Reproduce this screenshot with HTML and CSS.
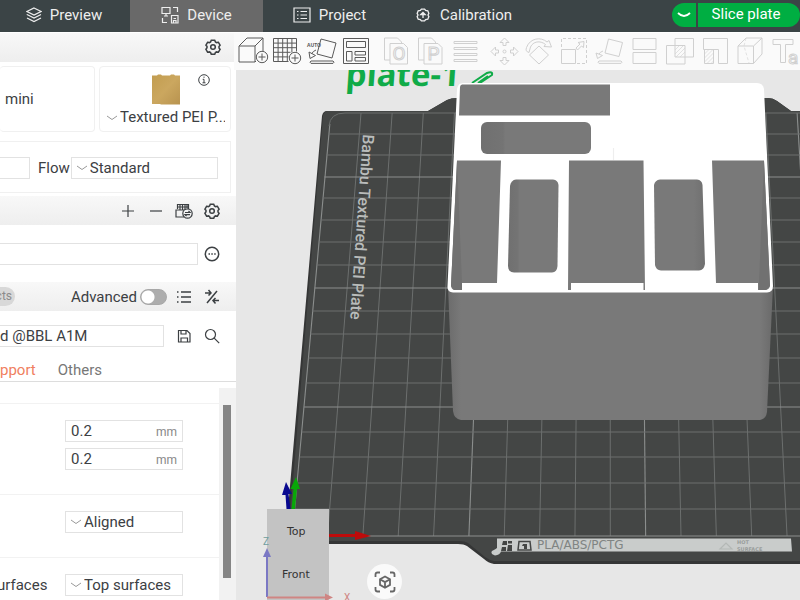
FILE: index.html
```html
<!DOCTYPE html>
<html lang="en">
<head>
<meta charset="utf-8">
<title>Slicer</title>
<link rel="stylesheet" href="styles.css">
</head>
<body>
<svg class="defs" aria-hidden="true">
  <symbol id="gear" viewBox="0 0 16 16"><path d="M6.3 1.2h3.4l.7 1.7 1.2.7 1.8-.3 1.7 2.9-1.1 1.4v1.3l1.1 1.4-1.7 2.9-1.8-.3-1.2.7-.7 1.7H6.3l-.7-1.7-1.2-.7-1.8.3-1.7-2.9L2 8.7V7.400L.9 6.200l1.700-2.900 1.800.3 1.200-.7z"/><circle cx="8" cy="8" r="2.300"/></symbol>
  <symbol id="chev" viewBox="0 0 12 8"><path d="M1 2l5 3.500 5-3.500"/></symbol>
</svg>
<header class="topbar">
  <nav class="tabs">
    <a class="tab" href="#"><svg class="ic16" viewBox="0 0 16 16"><path d="M8 1l7 3.500-7 3.500-7-3.500zM1 7.500L8 11l7-3.500M1 8v-.5M1 11l7 3.600 7-3.600"/></svg>Preview</a>
    <a class="tab active" href="#"><svg class="ic18" viewBox="0 0 18 18"><path d="M1 1.500h8v6H1zM5 7.500V10M3 10h4M12 1.500h4.500V6M1.500 12v4.500H6M10.500 9.500h6.500v7.500h-6.500zM12.500 12.500h2.500M12.500 17v-2.500h2.500V17"/></svg>Device</a>
    <a class="tab" href="#"><svg class="ic18" viewBox="0 0 18 18"><path d="M1 2h16v14H1zM4 5.500h1.500M7.500 5.500H14M4 9h1.500M7.500 9H14M4 12.500h1.500M7.500 12.500H14"/></svg>Project</a>
    <a class="tab wide" href="#"><svg class="ic14 bold" viewBox="0 0 16 16"><path d="M6.200 1.200h3.600l1.200 1.600 2.500.4 1.200 3-1 1.800 1 1.800-1.200 3-2.500.4-1.200 1.600H6.200L5 13.200l-2.500-.4-1.200-3 1-1.800-1-1.800 1.200-3L5 2.800z"/><path d="M8 11.500V5M5.500 7.500L8 5l2.500 2.500z"/></svg>Calibration</a>
  </nav>
  <div class="slice">
    <button class="slice-menu" type="button" aria-label="Slice options"><svg viewBox="0 0 14 8"><path d="M1 2q6 6 12 0"/></svg></button>
    <button class="slice-go" type="button">Slice plate</button>
  </div>
</header>
<div class="work">
  <aside class="side">
    <div class="band first"><button class="ib" type="button" aria-label="Printer settings"><svg class="ic16 bold"><use href="#gear"/></svg></button></div>
    <div class="cards">
      <div class="card printer">mini</div>
      <div class="card plate">
        <div class="plate-top">
          <svg class="sheet" viewBox="0 0 28 31"><defs><linearGradient id="gold" x1="0" y1="0" x2="1" y2="1"><stop offset="0" stop-color="#c29d50"/><stop offset=".5" stop-color="#cba75f"/><stop offset="1" stop-color="#b8934f"/></linearGradient></defs><path fill="url(#gold)" d="M0 1.500h5l1-1h3l1 1h8l1-1h3l1 1h5v29H9l-1-.5H0z"/></svg>
          <svg class="info" viewBox="0 0 12 12"><circle cx="6" cy="6" r="5.300"/><path d="M6 2.600v1.200M4.700 5.300H6v3.500M4.500 8.800h3"/></svg>
        </div>
        <label class="pick"><svg class="chev"><use href="#chev"/></svg><select aria-label="Plate type"><option>Textured PEI P...</option></select></label>
      </div>
    </div>
    <div class="nozzle">
      <input class="box stub" type="text" aria-label="Diameter">
      <label for="flow">Flow</label>
      <div class="box pick grow"><svg class="chev"><use href="#chev"/></svg><select id="flow"><option>Standard</option></select></div>
    </div>
    <div class="band filament">
      <button class="ib" type="button" aria-label="Add"><svg class="ic16" viewBox="0 0 16 16"><path d="M8 2v12M2 8h12"/></svg></button>
      <button class="ib" type="button" aria-label="Remove"><svg class="ic16" viewBox="0 0 16 16"><path d="M2 8h12"/></svg></button>
      <button class="ib" type="button" aria-label="Sync"><svg class="ic18" viewBox="0 0 18 16"><path d="M2.500 6V1.500h11V6M5 2v5M7.500 2v5M10 2v5M12 2v3M2.500 4h11M9 14H1V7h8"/><circle cx="12.500" cy="10.500" r="4.700"/><path d="M10 9.500h5l-1.500-1.500M15 11.700h-5l1.500 1.500"/></svg></button>
      <button class="ib" type="button" aria-label="Filament settings"><svg class="ic16 bold"><use href="#gear"/></svg></button>
    </div>
    <div class="row">
      <input class="box open" type="text" aria-label="Filament">
      <button class="ib" type="button" aria-label="More"><svg class="ic16 bold" viewBox="0 0 16 16"><circle cx="8" cy="8" r="6.700"/><path d="M4.500 8H6M7.300 8h1.500M10.200 8h1.500"/></svg></button>
    </div>
    <div class="band process">
      <button class="pill" type="button">cts</button>
      <label class="adv">Advanced<input type="checkbox" role="switch"></label>
      <button class="ib" type="button" aria-label="List"><svg class="ic16 bold" viewBox="0 0 16 16"><path d="M1 3h1.500M5 3h10M1 8h1.500M5 8h10M1 13h1.500M5 13h10"/></svg></button>
      <button class="ib" type="button" aria-label="Compare"><svg class="ic16 bold" viewBox="0 0 16 16"><path d="M13 2L3 14M1 4h6M4.500 1L7 4 4.500 6.500M15 11.500H9M11.500 9L9 11.500l2.500 3"/></svg></button>
    </div>
    <div class="row preset">
      <input class="box open" type="text" aria-label="Process" value="d @BBL A1M">
      <button class="ib" type="button" aria-label="Save"><svg class="ic14" viewBox="0 0 14 14"><path d="M1.500 1.500h8.500l3 3v8.500H1.500zM4 1.500v3.500h5V1.500M4 13V9h6.500v4"/></svg></button>
      <button class="ib" type="button" aria-label="Search"><svg class="ic16" viewBox="0 0 16 16"><circle cx="6.500" cy="6.500" r="5"/><path d="M10.200 10.200l5 5"/></svg></button>
    </div>
    <nav class="subtabs"><a class="on" href="#">pport</a><a href="#">Others</a></nav>
    <div class="scroll">
      <form class="params">
        <fieldset>
          <div class="field"><div class="box num"><input type="text" aria-label="Layer height" value="0.2"><span>mm</span></div></div>
          <div class="field"><div class="box num"><input type="text" aria-label="Initial layer height" value="0.2"><span>mm</span></div></div>
        </fieldset>
        <fieldset>
          <div class="field"><div class="box pick"><svg class="chev"><use href="#chev"/></svg><select aria-label="Seam position"><option>Aligned</option></select></div></div>
        </fieldset>
        <fieldset>
          <div class="field"><label for="iron">urfaces</label><div class="box pick"><svg class="chev"><use href="#chev"/></svg><select id="iron"><option>Top surfaces</option></select></div></div>
        </fieldset>
      </form>
      <div class="track"><div class="thumb"></div></div>
    </div>
  </aside>
  <main class="view">
    <div class="tools">
      <div class="group">
        <button type="button" aria-label="Add model"><svg viewBox="0 0 35 37"><path d="M5 13h16v16H5zM5 13l8-8h16l-8 8M29 5v13M21 29l1-1"/><circle cx="28" cy="24" r="5.700"/><path d="M28 20.500v7M24.500 24h7"/></svg></button>
        <button type="button" aria-label="Add plate"><svg viewBox="0 0 35 37"><path d="M4.500 5.500h23v13M4.500 5.500v23h15M9.100 5.500v23M13.700 5.500v23M18.300 5.500v23M22.900 5.500v14M4.500 10.100h23M4.500 14.700h23M4.500 19.300h17M4.500 23.900h15"/><circle cx="26" cy="25" r="5.700"/><path d="M26 21.500v7M22.500 25h7"/></svg></button>
        <button type="button" aria-label="Auto orient"><svg viewBox="0 0 35 37"><path d="M17 6l15 4-4 15-15-4zM7 28h22q2 1.200 0 2.400H7q-2-1.200 0-2.400zM12 17q-3 1-4.500 4M5 19l1 6.500 5.500-3z"/><text class="auto" x="3" y="13.500">AUTO</text></svg></button>
        <button type="button" aria-label="Arrange"><svg viewBox="0 0 35 37"><path d="M4.500 5.500h25v25h-25zM7.500 8.500h19v6h-19zM7.500 18.500h5.500v9.500H7.500zM16 18.500h10.500v3.500H16zM16 24.500h10.500V28H16z"/></svg></button>
      </div>
      <div class="group off">
        <button type="button" aria-label="Split to objects"><svg viewBox="0 0 35 37"><path d="M12 27H6.500V5h13l4 4v1.500M12 10.500h13.500l4 4V31H12z"/><text class="glyph" x="14.500" y="27">O</text></svg></button>
        <button type="button" aria-label="Split to parts"><svg viewBox="0 0 35 37"><path d="M11 27H5.500V5h13l4 4v1.500M11 10.500h14l4 4V31H11z"/><text class="glyph" x="14.500" y="27">P</text></svg></button>
        <button type="button" aria-label="Layer height"><svg viewBox="0 0 35 37"><path d="M6 8.500h23v2H6zM6 14.500h23v2H6zM6 20.500h23v2H6zM6 26.500h23v2H6z"/></svg></button>
      </div>
      <div class="group off">
        <button type="button" aria-label="Move"><svg viewBox="0 0 35 37"><path d="M17.500 5l4.500 4.500h-3v3h-3v-3h-3zM17.500 32l4.500-4.500h-3v-3h-3v3h-3zM4 18.500L8.500 14v3h3v3h-3v3zM31 18.500L26.500 14v3h-3v3h3v3z"/><circle cx="17.500" cy="18.500" r="1.500"/></svg></button>
        <button type="button" aria-label="Rotate"><svg viewBox="0 0 35 37"><path d="M17 13l9.500 9-9.500 9-9.500-9zM7 19.500q-4-1-2.500-5C8 5 19 3.500 25 9l2-1.500L29.500 14l-7.500-.5 1.500-2C18 7 11 8.500 8.500 14z"/></svg></button>
        <button type="button" aria-label="Scale"><svg viewBox="0 0 35 37"><path d="M4.500 16.500h14v14h-14z"/><path stroke-dasharray="3 2" d="M4.500 14V5.500h25v25H20"/><path d="M19 15l4-4-2-1.500 6-1-.5 6-2-1.500-4 4z"/></svg></button>
        <button type="button" aria-label="Lay on face"><svg viewBox="0 0 35 37"><path d="M16.500 6l14 3.500-3.500 14-14-3.500zM7 28h22q2 1.200 0 2.400H7q-2-1.200 0-2.400zM11 18q-3 1-4 3M4 20l1.500 5.500 5-3z"/></svg></button>
        <button type="button" aria-label="Cut"><svg viewBox="0 0 35 37"><path d="M6 5.500h23v11H6zM6 19.500h23v11H6z"/></svg></button>
        <button type="button" aria-label="Boolean"><svg viewBox="0 0 35 37"><path d="M4.500 12.500h18.500V31H4.500zM13 5.500h18.500V24H13z"/><path class="hatch" d="M13 17l4.500-4.500M13 21l8.500-8.500M14 24l9-9M18 24l5-5"/></svg></button>
        <button type="button" aria-label="Supports"><svg viewBox="0 0 35 37"><path d="M6.500 5.500h24v25h-9V16.500h-15zM7.500 16.500h9v14h-9z"/><path class="hatch" d="M7.500 21l4.500-4.500M7.500 25l8.500-8.500M7.500 29l9-9M10 30.500l6.500-6.500M14 30.500l2.500-2.500"/></svg></button>
        <button type="button" aria-label="Seam"><svg viewBox="0 0 35 37"><path d="M6 13h15.500v17.500H6zM6 13l8-8h16l-8.500 8M30 5v16l-8.500 9.500"/><path class="hatch" stroke-dasharray="3 2" d="M14 5l-2 8 5 17"/></svg></button>
        <button type="button" aria-label="Text"><svg viewBox="0 0 35 37"><path d="M6 6.500h20v5h-7.500v18h-5v-18H6z"/><text class="glyph" x="21" y="31">a</text></svg></button>
      </div>
    </div>
    <div class="scene">
      <svg class="canvas" id="canvas" viewBox="236 70 564 530" preserveAspectRatio="xMinYMin slice">
        <text class="pname" transform="translate(345 86) skewX(-4)">plate-1</text>
        <path d="M472 83L487 73Q493 71 492 75L480 83M478 83L488 76" fill="none" stroke="#10ab48" stroke-width="2"/>
        <path fill="#353636" d="M327 111H428L447 100Q451 98 457 98H768Q773 98 777 101L791 111H810V564H494Q488 563 484 559L467 546Q464 544 458 544H285L322 116Q323 111 327 111z"/>
        <path fill="#444645" d="M328 111H428L447 100Q451 98 457 98H768Q773 98 777 101L791 111H810V561H494Q489 560 485 557L468 543Q465 541 459 541H288L323 116Q324 111 328 111z"/>
        <g id="grid" class="grid"></g>
        <text class="pei" transform="translate(363 134) rotate(94)">Bambu Textured PEI Plate</text>
        <path fill="#c9cccb" d="M497 538.500H791L792 551.500H501Q500 555 495 555.500Q490 554 492 551Q496 549 497 548z"/>
        <g fill="#444645"><path d="M503 541h4v4h-5zM508 541h4v2.500h-4zM508 545h4v6h-5zM502 547h4v4h-5z"/><path d="M519 541.500h11l1 8.500h-13z" fill="none" stroke="#444645" stroke-width="1.500"/><path d="M523 544h4v5h-3v-3h-2z"/></g>
        <text class="mat" x="537" y="549">PLA/ABS/PCTG</text>
        <path d="M720 549l6-6 6 6z" fill="none" stroke="#b4b8b6"/>
        <text class="hot" x="737" y="544">HOT</text><text class="hot" x="737" y="551">SURFACE</text>
        <defs><linearGradient id="body"><stop offset="0" stop-color="#6c6c6c"/><stop offset=".04" stop-color="#797979"/><stop offset=".96" stop-color="#797979"/><stop offset="1" stop-color="#6a6a6a"/></linearGradient>
        <linearGradient id="pocket"><stop offset="0" stop-color="#707070"/><stop offset=".2" stop-color="#747474"/><stop offset=".22" stop-color="#797979"/></linearGradient>
        <linearGradient id="pocketr"><stop offset=".78" stop-color="#797979"/><stop offset="1" stop-color="#707070"/></linearGradient></defs>
        <path fill="url(#body)" d="M448 286L453 411Q454 419 461 420H760Q766 419 767 412L773 286z"/>
        <path fill="#fff" d="M463 83H757Q763 83 764 89L773 286Q773 292 767 292.500H453Q447 292 447.500 286L457 89Q458 83 463 83z"/>
        <g fill="#797979">
          <path d="M462 84.500H610V115.500H459L460 87Q460 85 462 84.500z"/>
          <rect x="481" y="122" width="110" height="32" rx="6" fill="url(#pocket)"/>
          <path d="M457 160.500H501L497 283H462V290H454Q451 289 451 285z"/>
          <path d="M516 179.500H553Q558 180 558.500 185L557.500 266Q557 272 552 272.500H514Q508 272 508 266L510 186Q511 180 516 179.500z" fill="url(#pocket)"/>
          <path d="M569 160.500H643.500L645 290H643.500V283H571V290H568z"/>
          <path d="M660 179.500H697Q702 180 702.500 185L705 264Q704 270 699 270.500H661Q656 270 655 265L654 185Q655 180 660 179.500z" fill="url(#pocketr)"/>
          <path d="M712 160.500H764L770 285Q770 289 766 290H758V283H716z"/>
        </g>
        <path d="M451 286L457 161L462 283V290H454zM770 286L764 161 759 283V290H766z" fill="#717171"/>
        <path d="M613.500 148v12" stroke="#eee"/>
        <g><path d="M286.500 509l-1-14h-3.500l4-13 6 12h-3.500l2 15z" fill="#09098f"/><path d="M291.500 509l2-20h-3l5.500-12 4 12h-3l-2 20z" fill="#08a708"/><path d="M329 534h26v-3l16 5-16 4v-3h-26z" fill="#bd0b0b"/></g>
        <path d="M267 509H329V600H267z" fill="#c3c3c3"/>
        <path d="M267 597V555" stroke="#7b78c4" stroke-width="2"/><path d="M263 557l4-9 4 9z" fill="#7b78c4"/>
        <path d="M267 597.500H326" stroke="#cf8583" stroke-width="2"/><path d="M325 593.500l8 4-8 3.500z" fill="#cf8583"/>
        <text class="cube" x="287" y="534.500">Top</text><text class="cube" x="282" y="578">Front</text>
        <text class="axz" x="263" y="545">Z</text><text class="axx" x="344" y="601">X</text>
      </svg>
      <button class="fit" type="button" aria-label="Fit view"><svg viewBox="0 0 22 22"><path d="M1.500 6V3.500q0-2 2-2H6M16 1.500h2.500q2 0 2 2V6M20.500 16v2.500q0 2-2 2H16M6 20.500H3.500q-2 0-2-2V16"/><path d="M11 5.500l5 2.800v5.600l-5 2.800-5-2.800V8.300zM6 8.300l5 2.800 5-2.800M11 11v5.700"/></svg></button>
    </div>
  </main>
</div>
<script src="grid.js"></script>
</body>
</html>
```
FILE: grid.js
```js
// Draws the perspective grid of the build plate.
const grid = document.getElementById("grid");
function line(x1, y1, x2, y2, major) {
  const el = document.createElementNS("http://www.w3.org/2000/svg", "path");
  el.setAttribute("d", `M${x1} ${y1}L${x2} ${y2}`);
  if (major) el.setAttribute("class", "major");
  grid.appendChild(el);
}
for (let k = -1; k <= 14; k++) {
  const top = k === -1 ? 124 : 113;
  line(361 + 31.15 * k, top, 327.5 + 35.35 * k, 536, k % 5 === 4 || k === -1);
}
const rows = [134, 155, 177, 198, 220, 242, 265, 288, 311, 334, 358, 383, 407, 432, 457, 483, 509, 536];
rows.forEach((y, i) => line(330 - (y - 113) * 0.088, y, 810, y, i % 5 === 2 || i === 17));
const corner = document.createElementNS("http://www.w3.org/2000/svg", "path");
corner.setAttribute("d", "M329 126Q330 113 345 113H810");
grid.appendChild(corner);
```
FILE: styles.css
```css
* { box-sizing: border-box; }
body {
  margin: 0;
  height: 100vh;
  display: flex;
  flex-direction: column;
  overflow: hidden;
  font: 15px/20px Roboto, "Noto Sans", sans-serif;
  color: #3c4043;
  background: #fff;
}
button, input, select { font: inherit; color: inherit; }
button { border: 0; padding: 0; background: none; }
a { text-decoration: none; color: inherit; }
svg { fill: none; stroke: currentColor; stroke-width: 1.2; flex: none; }
.defs { position: absolute; width: 0; height: 0; }
.ic14 { width: 14px; height: 14px; }
.ic16 { width: 16px; height: 16px; }
.ic18 { width: 18px; height: 18px; }
.bold { stroke-width: 1.5; }

.topbar {
  flex: none;
  display: flex;
  justify-content: space-between;
  height: 32px;
  padding-bottom: 2px;
  background: #3b4446;
  color: #eee;
}
.tabs { display: flex; margin-bottom: -2px; }
.tab {
  display: flex;
  align-items: center;
  justify-content: center;
  gap: 8px;
  width: 133px;
  padding-bottom: 3px;
}
.tab:first-child { width: 130px; padding-right: 2px; }
.tab.active { background: #696969; }
.tab.wide { width: 136px; gap: 10px; }
.slice { display: flex; gap: 2px; padding: 3px 0; }
.slice button { background: #00ae42; color: #fff; }
.slice-menu {
  width: 24px;
  border-radius: 12px 0 0 12px;
  display: flex;
  align-items: center;
  justify-content: center;
}
.slice-menu svg { width: 14px; height: 8px; stroke-width: 1.8; }
.slice-go { width: 102px; padding: 0 6px 2px 0; border-radius: 0 12px 12px 0; }

.work { flex: 1; display: flex; min-height: 0; padding-top: 1px; }
.side { flex: none; width: 236px; display: flex; flex-direction: column; }
.band {
  flex: none;
  display: flex;
  align-items: center;
  justify-content: flex-end;
  height: 29px;
  gap: 12px;
  padding-right: 16px;
  background: linear-gradient(#f8f8f8, #eee);
}
.ib { display: flex; align-items: center; justify-content: center; width: 16px; height: 20px; }
.band.first { padding: 0 15px 2px 0; }
.cards { display: flex; gap: 4px; padding: 4px 5px 0 0; height: 70px; }
.card { border: 1px solid #f0f0f0; border-radius: 4px; }
.printer { flex: 1; border-left: 0; display: flex; align-items: center; padding-left: 5px; }
.plate { width: 132px; padding: 7px 5px 0 6px; }
.plate-top { display: flex; justify-content: flex-end; gap: 18px; padding-right: 15px; height: 34px; }
.sheet { width: 28px; height: 31px; stroke: none; }
.info { width: 12px; height: 12px; stroke-width: 1; }
.pick { display: flex; align-items: center; }
.pick select { appearance: none; flex: 1; min-width: 0; border: 0; padding: 0; margin: 0; background: none; outline: 0; height: 19px; line-height: 19px; }
.chev { width: 12px; height: 8px; color: #999; stroke-width: 1; margin-right: 2px; }
.box { height: 22px; border: 1px solid #e2e2e2; background: #fff; outline: 0; }
.box.pick { padding-left: 4px; }
.nozzle {
  display: flex;
  align-items: center;
  height: 52px;
  margin: 9px 5px 3px 0;
  padding: 2px 12px 0 0;
  border: 1px solid #f0f0f0;
  border-left: 0;
}
.stub { width: 30px; margin-right: 8px; border-left: 0; }
.grow { flex: 1; margin-left: 1px; }
.row { display: flex; align-items: center; gap: 6px; height: 57px; padding-right: 16px; }
.open { flex: 1; min-width: 0; border-left: 0; padding: 0; }
.process { justify-content: flex-start; }
.pill {
  width: 15px;
  height: 19px;
  margin-right: 34px;
  font-size: 12px;
  line-height: 19px;
  color: #8b8b8b;
  background: #d8d8d8;
  border-radius: 0 10px 10px 0;
  direction: rtl;
  padding-right: 3px;
  overflow: hidden;
}
.adv { display: flex; align-items: center; flex: 1; justify-content: flex-end; gap: 3px; margin-right: -3px; margin-left: -24px; }
.adv input {
  appearance: none;
  margin: 0;
  width: 27px;
  height: 16px;
  border-radius: 8px;
  border: 1px solid #a8a8a8;
  background: radial-gradient(circle at 7px 7px, #fff 6px, #adadad 7px);
}
.preset { height: 49px; gap: 12px; }
.subtabs { display: flex; gap: 22px; height: 22px; line-height: 20px; border-bottom: 1px solid #ddd; color: #777; }
.on { color: #f0805f; }
.scroll { flex: 1; display: flex; min-height: 0; }
.params { flex: 1; padding-top: 21px; overflow: hidden; }
fieldset { border: 0; border-top: 1px solid #f2f2f2; margin: 0; padding: 16px 36px 24px 0; min-width: 0; display: grid; gap: 6px; }
.field { display: flex; justify-content: flex-end; align-items: center; }
.field label { flex: 1; margin-left: -3px; }
.field .box { width: 118px; }
.num { display: flex; align-items: center; padding: 0 5px; }
.num input { flex: 1; min-width: 0; border: 0; padding: 0; outline: 0; height: 18px; }
.num span { font-size: 12px; color: #888; padding-top: 2px; }
.track { width: 17px; margin-top: 6px; background: #f2f2f2; padding: 17px 5px 22px 4px; }
.thumb { height: 100%; background: #858585; }

.view { flex: 1; min-width: 0; display: flex; flex-direction: column; background: #e7e7e7; }
.tools { flex: none; display: flex; gap: 4px; height: 37px; margin-left: -2px; background: #fafafa; overflow: hidden; }
.group { display: flex; flex: none; }
.group button { width: 35px; height: 37px; color: #5a5a5a; }
.group.off button { color: #d0d0d0; }
.group svg { display: block; width: 35px; height: 37px; stroke-width: 1; }
.group .hatch { stroke-width: .6; }
.auto { font: bold 5px "Open Sans", sans-serif; fill: currentColor; stroke: none; }
.glyph { font: 19px Roboto, sans-serif; stroke-width: 1; }
.scene { position: relative; flex: 1; min-height: 0; overflow: hidden; }
.canvas { display: block; width: 100%; height: 100%; stroke: none; }
.grid { stroke: #6c6f6e; stroke-width: 1; fill: none; }
.grid .major { stroke: #8b8e8d; stroke-width: 1.1; }
.pname { font: bold 33px "Open Sans", sans-serif; fill: #10ab48; }
.pei { font: 500 16px Roboto, sans-serif; fill: #b9bcbb; }
.mat { font: 12px "DejaVu Sans", sans-serif; fill: #808483; }
.hot { font: bold 5px "DejaVu Sans", sans-serif; fill: #999d9b; }
.cube { font: 11px "DejaVu Sans", sans-serif; fill: #333; }
.axz { font: 10px Roboto, sans-serif; fill: #6f9e9e; }
.axx { font: 10px Roboto, sans-serif; fill: #cf8583; }
.fit {
  position: absolute;
  left: 131px;
  bottom: 1px;
  width: 35px;
  height: 35px;
  border-radius: 50%;
  background: #fafafa;
  color: #666;
  display: flex;
  align-items: center;
  justify-content: center;
}
.fit svg { width: 22px; height: 22px; stroke-width: 1.8; }
```
